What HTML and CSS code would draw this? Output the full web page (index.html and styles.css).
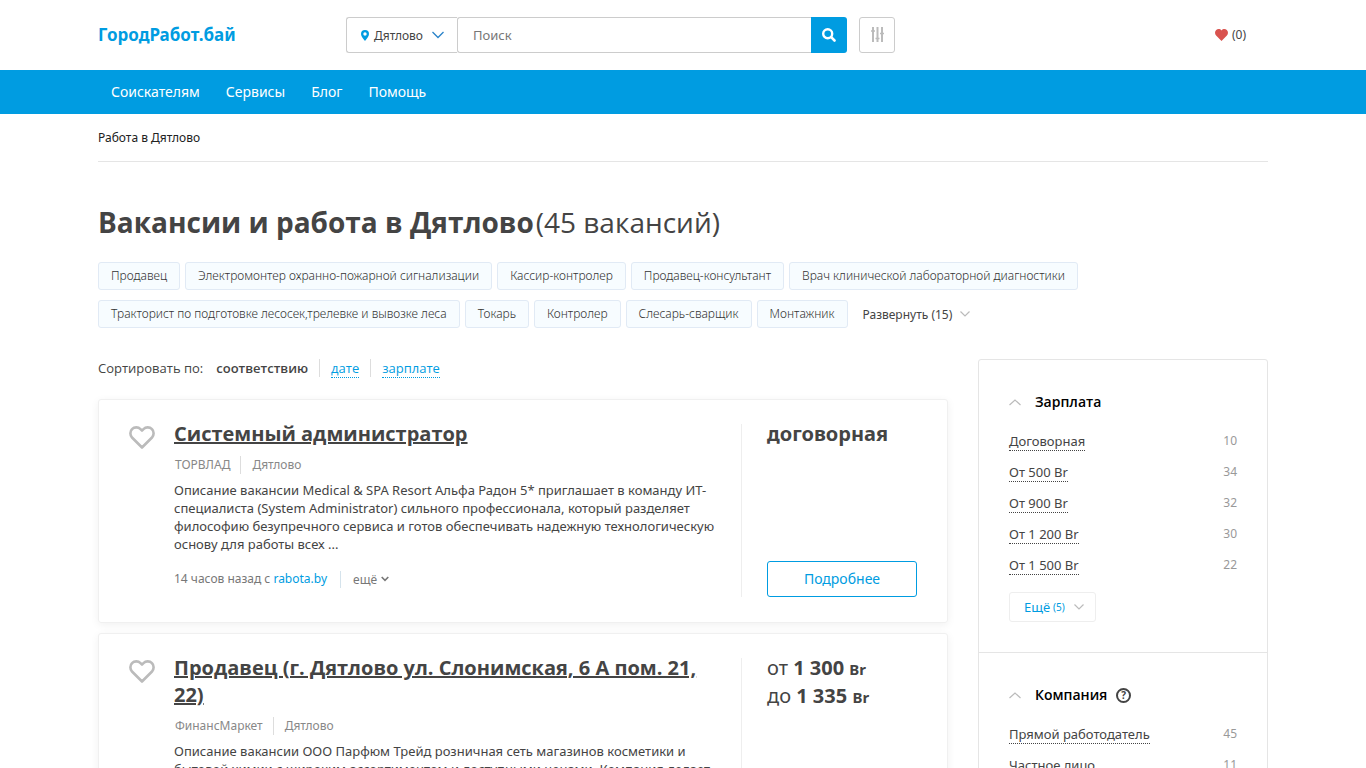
FILE: index.html
```html
<!DOCTYPE html>
<html lang="ru">
<head>
    <meta charset="UTF-8">
    <meta name="viewport" content="width=device-width, initial-scale=1.0">
    <title>Вакансии и работа в Дятлово</title>
    <link rel="stylesheet" href="styles.css">
</head>
<body>

<header class="header">
    <div class="container header-inner">
        <a href="#" class="logo">ГородРабот.бай</a>
        <form class="search">
            <button type="button" class="city-btn">
                <svg class="icon-pin" width="8" height="11" viewBox="0 0 8 11"><path fill="#009ce1" fill-rule="evenodd" d="M4 0a4 4 0 0 1 4 4c0 2.200-2.200 4.700-4 7C2.200 8.700 0 6.200 0 4a4 4 0 0 1 4-4zm0 2.300a1.700 1.700 0 1 0 0 3.400 1.700 1.700 0 0 0 0-3.400z"/></svg>
                <span>Дятлово</span>
                <svg class="icon-city-arrow" width="12" height="8" viewBox="0 0 12 8"><path fill="none" stroke="#2a83c9" stroke-width="1.300" d="M.5 1 6 6.500 11.500 1"/></svg>
            </button>
            <input type="text" class="search-input" placeholder="Поиск" aria-label="Поиск">
            <button type="submit" class="search-btn" aria-label="Найти">
                <svg width="14" height="14" viewBox="0 0 14 14"><circle cx="5.700" cy="5.700" r="4.500" fill="none" stroke="#fff" stroke-width="2.400"/><path stroke="#fff" stroke-width="2.600" stroke-linecap="round" d="m9.200 9.200 3.300 3.300"/></svg>
            </button>
        </form>
        <button type="button" class="filter-btn" aria-label="Фильтры">
            <svg width="13" height="15" viewBox="0 0 13 15"><path fill="none" stroke="#bbb" stroke-width="2" d="M2 0v15M6.500 0v15M11 0v15"/><path stroke="#bbb" stroke-width="1.500" d="M0 4h4M4.500 11.500h4M9 6.500h4"/></svg>
        </button>
        <a href="#" class="favorites">
            <svg width="13" height="12" viewBox="0 0 13 12"><path fill="#d9534f" d="M6.500 12 1.100 6.500C-.4 4.900-.3 2.400 1.200 1 2.700-.4 5.100-.3 6.500 1.500 7.900-.3 10.300-.4 11.800 1c1.500 1.400 1.600 3.900.1 5.500z"/></svg>
            <span>(0)</span>
        </a>
    </div>
</header>

<nav class="nav">
    <div class="container nav-inner">
        <a href="#">Соискателям</a>
        <a href="#">Сервисы</a>
        <a href="#">Блог</a>
        <a href="#">Помощь</a>
    </div>
</nav>

<main class="container">
    <div class="breadcrumbs">Работа в Дятлово</div>

    <div class="title">
        <h1>Вакансии и работа в Дятлово</h1>
        <span>(45 вакансий)</span>
    </div>

    <div class="tags">
        <a href="#" class="tag">Продавец</a>
        <a href="#" class="tag">Электромонтер охранно-пожарной сигнализации</a>
        <a href="#" class="tag">Кассир-контролер</a>
        <a href="#" class="tag">Продавец-консультант</a>
        <a href="#" class="tag">Врач клинической лабораторной диагностики</a>
        <a href="#" class="tag">Тракторист по подготовке лесосек,трелевке и вывозке леса</a>
        <a href="#" class="tag">Токарь</a>
        <a href="#" class="tag">Контролер</a>
        <a href="#" class="tag">Слесарь-сварщик</a>
        <a href="#" class="tag">Монтажник</a>
        <button type="button" class="tags-more">Развернуть (15)
            <svg width="10" height="6" viewBox="0 0 10 6"><path fill="none" stroke="#bbb" stroke-width="1.200" d="m.5.500 4.500 4.500L9.500.500"/></svg>
        </button>
    </div>

    <div class="content">
        <section class="results">
            <div class="sort">
                <span class="sort-label">Сортировать по:</span>
                <b class="sort-item">соответствию</b>
                <span class="sort-item"><a href="#">дате</a></span>
                <span class="sort-item"><a href="#">зарплате</a></span>
            </div>

            <article class="card">
                <button type="button" class="like" aria-label="В избранное">
                    <svg width="26" height="23" viewBox="0 0 26 23"><path fill="none" stroke="#bbb" stroke-width="2.600" stroke-linejoin="round" d="M13 21.500 3 11.500C.8 9.200.9 5.200 3 3.200c2.400-2.400 6.200-2.400 8.500-.1L13 4.600l1.500-1.500c2.300-2.300 6.100-2.300 8.500.1 2.100 2 2.200 6 0 8.300z"/></svg>
                </button>
                <div class="card-body">
                    <h2><a href="#">Системный администратор</a></h2>
                    <div class="company"><span>ТОРВЛАД</span><span>Дятлово</span></div>
                    <p class="description">Описание вакансии Medical &amp; SPA Resort Альфа Радон 5* приглашает в команду ИТ-специалиста (System Administrator) сильного профессионала, который разделяет философию безупречного сервиса и готов обеспечивать надежную технологическую основу для работы всех ...</p>
                    <div class="card-footer">
                        <span>14 часов назад с <a href="#">rabota.by</a></span>
                        <button type="button" class="more">ещё
                            <svg width="8" height="6" viewBox="0 0 8 6"><path fill="none" stroke="#777" stroke-width="1.600" d="m.7 1 3.300 3.300L7.300 1"/></svg>
                        </button>
                    </div>
                </div>
                <div class="card-side">
                    <div class="salary"><b>договорная</b></div>
                    <a href="#" class="details-btn">Подробнее</a>
                </div>
            </article>

            <article class="card">
                <button type="button" class="like" aria-label="В избранное">
                    <svg width="26" height="23" viewBox="0 0 26 23"><path fill="none" stroke="#bbb" stroke-width="2.600" stroke-linejoin="round" d="M13 21.500 3 11.500C.8 9.200.9 5.200 3 3.200c2.400-2.400 6.200-2.400 8.500-.1L13 4.600l1.500-1.500c2.300-2.300 6.100-2.300 8.500.1 2.100 2 2.200 6 0 8.300z"/></svg>
                </button>
                <div class="card-body">
                    <h2><a href="#">Продавец (г. Дятлово ул. Слонимская, 6 А пом. 21, 22)</a></h2>
                    <div class="company"><span>ФинансМаркет</span><span>Дятлово</span></div>
                    <p class="description">Описание вакансии ООО Парфюм Трейд розничная сеть магазинов косметики и бытовой химии с широким ассортиментом и доступными ценами. Компания делает ...</p>
                    <div class="card-footer">
                        <span>14 часов назад с <a href="#">rabota.by</a></span>
                        <button type="button" class="more">ещё
                            <svg width="8" height="6" viewBox="0 0 8 6"><path fill="none" stroke="#777" stroke-width="1.600" d="m.7 1 3.300 3.300L7.300 1"/></svg>
                        </button>
                    </div>
                </div>
                <div class="card-side">
                    <div class="salary">от <b>1 300 <small>Br</small></b><br>до <b>1 335 <small>Br</small></b></div>
                    <a href="#" class="details-btn">Подробнее</a>
                </div>
            </article>
        </section>

        <aside class="filters">
            <section class="filter">
                <h3>
                    <svg width="12" height="7" viewBox="0 0 12 7"><path fill="none" stroke="#bbb" stroke-width="1.200" d="M.5 6 6 1l5.500 5"/></svg>
                    Зарплата
                </h3>
                <ul>
                    <li><a href="#">Договорная</a><span>10</span></li>
                    <li><a href="#">От 500 Br</a><span>34</span></li>
                    <li><a href="#">От 900 Br</a><span>32</span></li>
                    <li><a href="#">От 1 200 Br</a><span>30</span></li>
                    <li><a href="#">От 1 500 Br</a><span>22</span></li>
                </ul>
                <button type="button" class="filter-more">Ещё <small>(5)</small>
                    <svg width="10" height="6" viewBox="0 0 10 6"><path fill="none" stroke="#bbb" stroke-width="1.200" d="m.5.500 4.500 4.500L9.500.500"/></svg>
                </button>
            </section>
            <section class="filter">
                <h3>
                    <svg width="12" height="7" viewBox="0 0 12 7"><path fill="none" stroke="#bbb" stroke-width="1.200" d="M.5 6 6 1l5.500 5"/></svg>
                    Компания
                    <span class="hint">?</span>
                </h3>
                <ul>
                    <li><a href="#">Прямой работодатель</a><span>45</span></li>
                    <li><a href="#">Частное лицо</a><span>11</span></li>
                </ul>
            </section>
        </aside>
    </div>
</main>

</body>
</html>
```
FILE: styles.css
```css
* {
    box-sizing: border-box;
}

body {
    margin: 0;
    font-family: "Noto Sans", "Open Sans", sans-serif;
    font-size: 13px;
    line-height: 18px;
    color: #444;
    background-color: #fff;
}

a {
    color: #009ce1;
    text-decoration: none;
}

button, input {
    font-family: inherit;
    font-size: 13px;
    color: #444;
}

button {
    padding: 0;
    border: none;
    background: none;
    cursor: pointer;
}

svg {
    flex-shrink: 0;
}

.container {
    max-width: 1170px;
    margin: 0 auto;
}

.title, .sort, h2, h3 {
    font-family: "Open Sans", "Noto Sans", sans-serif;
}

/* Header */

.header-inner {
    display: flex;
    align-items: center;
    height: 70px;
}

.logo {
    width: 248px;
    font-size: 17px;
    font-weight: 700;
    line-height: 24px;
}

.search {
    display: flex;
    width: 501px;
    height: 36px;
}

.city-btn {
    display: flex;
    align-items: center;
    width: 111px;
    padding: 0 13px 0 14px;
    border: 1px solid #ccc;
    border-right: none;
    border-radius: 3px 0 0 3px;
    font-size: 12px;
}

.icon-pin {
    margin-right: 5px;
}

.icon-city-arrow {
    margin-left: auto;
}

.search-input {
    flex: 1;
    min-width: 0;
    padding: 0 15px;
    border: 1px solid #ccc;
    border-right: none;
    border-radius: 3px 0 0 3px;
}

.search-input::placeholder {
    color: #777;
}

.search-btn {
    display: flex;
    align-items: center;
    justify-content: center;
    width: 36px;
    background-color: #009ce1;
    border-radius: 0 3px 3px 0;
}

.filter-btn {
    display: flex;
    justify-content: center;
    width: 36px;
    height: 36px;
    margin-left: 12px;
    padding-top: 9px;
    border: 1px solid #ccc;
    border-radius: 3px;
}

.favorites {
    display: flex;
    align-items: center;
    gap: 4px;
    margin-left: auto;
    margin-right: 22px;
    font-size: 12px;
    color: #444;
}

.nav {
    background-color: #009ce1;
}

.nav-inner {
    display: flex;
    gap: 26px;
    padding: 0 13px;
}

.nav a {
    font-size: 14px;
    line-height: 44px;
    color: #fff;
}

/* Page top */

.breadcrumbs {
    padding: 15px 0 14px;
    border-bottom: 1px solid #e5e5e5;
    font-size: 12px;
    color: #222;
}

.title {
    display: flex;
    gap: 2px;
    margin: 40px 0 20px;
    font-size: 28px;
    line-height: 40px;
}

h1 {
    margin: 0;
    font-size: 28px;
}

.tags {
    display: flex;
    flex-wrap: wrap;
    gap: 10px 5px;
    padding-right: 180px;
}

.tag {
    padding: 4px 12px;
    border: 1px solid #e1eaf5;
    border-radius: 3px;
    background-color: #f7fcff;
    font-size: 12px;
    font-weight: 300;
    color: #333;
}

.tags-more {
    display: flex;
    align-items: center;
    gap: 8px;
    margin-left: 10px;
    font-size: 12px;
}

.content {
    display: flex;
    align-items: flex-start;
    gap: 30px;
    margin-top: 31px;
}

/* Vacancies */

.results {
    flex: 1;
    min-width: 0;
}

.sort {
    display: flex;
    margin-bottom: 22px;
}

.sort-label {
    margin-right: 13px;
}

.sort-item {
    margin-right: 11px;
    font-weight: 400;
}

.sort-item + .sort-item {
    padding-left: 11px;
    border-left: 1px solid #ddd;
}

b.sort-item {
    font-weight: 600;
}

.sort a {
    border-bottom: 1px dotted #009ce1;
}

.card {
    display: flex;
    margin-bottom: 10px;
    padding: 20px 30px 25px;
    border: 1px solid #f0f0f0;
    border-radius: 3px;
    box-shadow: 0 2px 8px rgba(0, 0, 0, 0.06);
}

.like {
    align-self: flex-start;
    width: 26px;
    height: 23px;
    margin: 6px 19px 0 0;
}

.like svg {
    display: block;
}

.card-body {
    flex: 1;
    min-width: 0;
    padding-right: 25px;
}

h2 {
    margin: 0 0 9px;
    font-size: 20px;
    line-height: 27px;
}

h2 a {
    color: #444;
    text-decoration: underline;
}

.company {
    display: flex;
    margin-bottom: 7px;
    padding-left: 1px;
    font-size: 12px;
    color: #888;
}

.company span + span {
    margin-left: 10px;
    padding-left: 11px;
    border-left: 1px solid #ddd;
}

.description {
    margin: 0;
}

.card-footer {
    display: flex;
    align-items: center;
    margin-top: 17px;
    font-size: 12px;
    color: #777;
}

.more {
    display: flex;
    align-items: center;
    gap: 4px;
    margin-left: 13px;
    padding-left: 12px;
    border-left: 1px solid #d5e3ec;
    font-size: 12px;
    color: #777;
}

.card-side {
    display: flex;
    flex-direction: column;
    justify-content: space-between;
    width: 176px;
    min-height: 173px;
    margin-top: 4px;
    padding-left: 25px;
    border-left: 1px solid #eee;
}

.salary {
    margin-top: -4px;
    font-size: 20px;
    line-height: 28px;
}

.salary small {
    font-size: 15px;
    line-height: 16px;
}

.details-btn {
    border: 1px solid #009ce1;
    border-radius: 3px;
    font-size: 14px;
    line-height: 34px;
    text-align: center;
}

/* Filters */

.filters {
    width: 290px;
    border: 1px solid #e5e5e5;
    border-radius: 3px;
}

.filter {
    padding: 30px;
}

.filter + .filter {
    border-top: 1px solid #e5e5e5;
}

h3 {
    display: flex;
    align-items: center;
    margin: 0 0 17px;
    font-size: 14px;
    font-weight: 600;
    line-height: 24px;
    color: #000;
}

h3 svg {
    margin-right: 14px;
}

.hint {
    width: 15px;
    height: 15px;
    margin-left: 9px;
    border: 2px solid #444;
    border-radius: 50%;
    font-size: 10px;
    font-weight: 700;
    line-height: 11px;
    text-align: center;
    color: #444;
}

.filter ul {
    margin: 0;
    padding: 0;
    list-style: none;
}

.filter li {
    display: flex;
    justify-content: space-between;
    height: 31px;
    line-height: 20px;
}

.filter li a {
    height: 20px;
    border-bottom: 1px dotted #444;
    color: #444;
}

.filter li span {
    font-size: 12px;
    color: #999;
}

.filter-more {
    display: flex;
    align-items: center;
    height: 30px;
    margin-top: 6px;
    padding: 0 11px 0 14px;
    border: 1px solid #eee;
    border-radius: 3px;
    color: #009ce1;
}

.filter-more small {
    margin-left: 3px;
    font-size: 10px;
}

.filter-more svg {
    margin-left: 9px;
}
```
